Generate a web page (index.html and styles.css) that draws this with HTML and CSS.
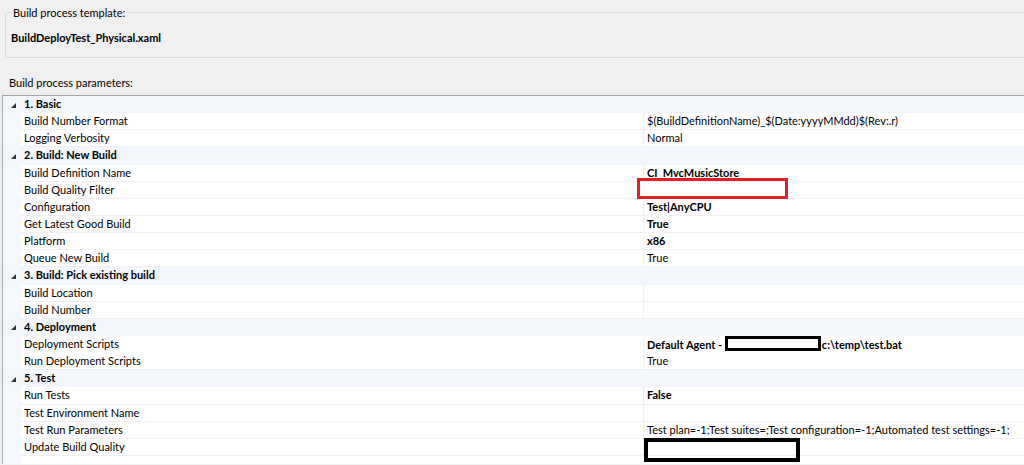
FILE: index.html
```html
<!DOCTYPE html>
<html>
<head>
  <meta charset="UTF-8">
  <title>Build process parameters</title>
  <link rel="stylesheet" href="styles.css">
</head>
<body>
  <fieldset class="template-box">
    <legend>Build process template:</legend>
    <div class="template-name">BuildDeployTest_Physical.xaml</div>
  </fieldset>

  <div class="params-label">Build process parameters:</div>

  <div class="grid">
    <div class="cat"><span class="arrow"></span><span class="cat-name">1. Basic</span></div>
    <div class="prop"><span class="gutter"></span><span class="name">Build Number Format</span><span class="value">$(BuildDefinitionName)_$(Date:yyyyMMdd)$(Rev:.r)</span></div>
    <div class="prop"><span class="gutter"></span><span class="name">Logging Verbosity</span><span class="value">Normal</span></div>

    <div class="cat"><span class="arrow"></span><span class="cat-name">2. Build: New Build</span></div>
    <div class="prop"><span class="gutter"></span><span class="name">Build Definition Name</span><span class="value bold">CI_MvcMusicStore</span></div>
    <div class="prop"><span class="gutter"></span><span class="name">Build Quality Filter</span><span class="value"><span class="mark-red"></span></span></div>
    <div class="prop"><span class="gutter"></span><span class="name">Configuration</span><span class="value bold">Test|AnyCPU</span></div>
    <div class="prop"><span class="gutter"></span><span class="name">Get Latest Good Build</span><span class="value bold">True</span></div>
    <div class="prop"><span class="gutter"></span><span class="name">Platform</span><span class="value bold">x86</span></div>
    <div class="prop"><span class="gutter"></span><span class="name">Queue New Build</span><span class="value">True</span></div>

    <div class="cat"><span class="arrow"></span><span class="cat-name">3. Build: Pick existing build</span></div>
    <div class="prop"><span class="gutter"></span><span class="name">Build Location</span><span class="value"></span></div>
    <div class="prop"><span class="gutter"></span><span class="name">Build Number</span><span class="value"></span></div>

    <div class="cat"><span class="arrow"></span><span class="cat-name">4. Deployment</span></div>
    <div class="prop"><span class="gutter"></span><span class="name">Deployment Scripts</span><span class="value bold">Default Agent - <span class="mark-inline"></span>c:\temp\test.bat</span></div>
    <div class="prop"><span class="gutter"></span><span class="name">Run Deployment Scripts</span><span class="value">True</span></div>

    <div class="cat"><span class="arrow"></span><span class="cat-name">5. Test</span></div>
    <div class="prop"><span class="gutter"></span><span class="name">Run Tests</span><span class="value bold">False</span></div>
    <div class="prop"><span class="gutter"></span><span class="name">Test Environment Name</span><span class="value"></span></div>
    <div class="prop"><span class="gutter"></span><span class="name">Test Run Parameters</span><span class="value">Test plan=-1;Test suites=;Test configuration=-1;Automated test settings=-1;</span></div>
    <div class="prop"><span class="gutter"></span><span class="name">Update Build Quality</span><span class="value"><span class="mark-black"></span></span></div>
  </div>
</body>
</html>
```

FILE: styles.css
```css
body {
  margin: 0;
  background-color: #f0f0f0;
  font-family: Lato, "Open Sans", sans-serif;
  font-size: 11px;
  color: #000;
  overflow: hidden;
}

/* Template group box */
.template-box {
  margin: 4px -10px 0 5px;
  padding: 8px 6px 18px 5px;
  border: 1px solid #d3dde4;
  border-radius: 3px;
  height: 26px;
}

.template-box legend {
  padding: 0 2px;
  margin-left: 0;
  line-height: 17px;
}

.template-name {
  font-weight: bold;
  line-height: 17px;
}

.params-label {
  margin: 16px 0 0 9px;
  line-height: 17px;
}

/* Property grid */
.grid {
  margin-top: 4px;
  margin-left: 2px;
  height: 368px;
  border-top: 1px solid #a3a3a3;
  border-left: 1px solid #a8a8a8;
  background: linear-gradient(to right, #f4f7fb 18px, #fff 18px);
}

.cat,
.prop {
  display: grid;
  grid-template-columns: 18px 622px 1fr;
  height: 17.15px;
  line-height: 16px;
  box-sizing: border-box;
}

.cat {
  background-color: #f3f6fb;
}

.arrow {
  align-self: center;
  justify-self: center;
  width: 0;
  height: 0;
  border-left: 5px solid transparent;
  border-bottom: 5px solid #333;
  margin-left: 2px;
  margin-top: 1px;
}

.cat-name {
  grid-column: 2 / 4;
  font-weight: bold;
  padding-left: 3px;
}

.prop .gutter {
  background-color: #f4f7fb;
}

.prop .name,
.prop .value {
  background-color: #fff;
  border-bottom: 1px solid #f0f0f0;
  padding-left: 3px;
  white-space: nowrap;
}

.prop .value {
  border-left: 1px solid #f0f0f0;
  position: relative;
}

.bold {
  font-weight: bold;
}

/* Redaction marks drawn over the screenshot */
.mark-red {
  position: absolute;
  left: -7px;
  top: -4px;
  width: 145px;
  height: 15px;
  border: 3px solid #e41e26;
}

.mark-inline {
  display: inline-block;
  width: 90px;
  height: 9px;
  border: 3px solid #000;
  vertical-align: -2px;
  margin-right: 1px;
}

.mark-black {
  position: absolute;
  left: 0;
  top: -1px;
  width: 148px;
  height: 16px;
  border: 4px solid #000;
}
```
